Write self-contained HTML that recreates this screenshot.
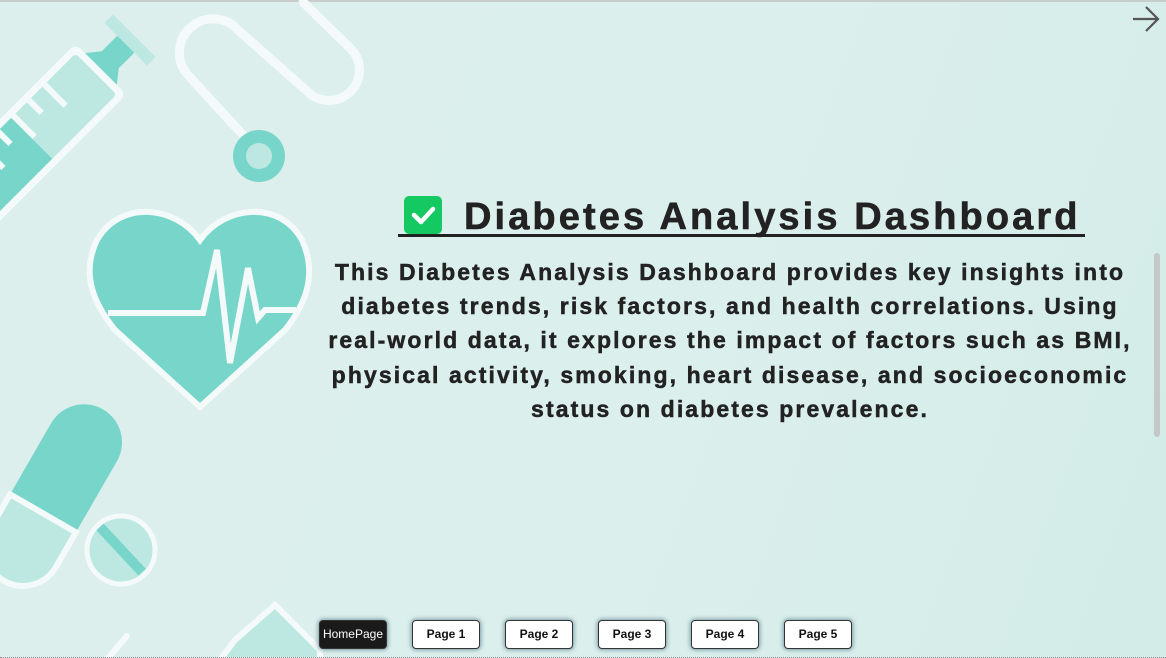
<!DOCTYPE html>
<html><head><style>
html,body{margin:0;padding:0}
body{width:1166px;height:658px;overflow:hidden;position:relative;font-family:"Liberation Sans",Arial,sans-serif;background:linear-gradient(110deg,#dcefec 0%,#dbefec 60%,#d3ece7 100%)}
.top{position:absolute;left:0;top:0;width:1166px;height:2px;background:#c8cccb}
.bot{position:absolute;left:0;bottom:0;width:1166px;height:0;border-bottom:1px dotted #888}
h1{position:absolute;left:398px;top:196px;margin:0;font-size:38px;font-weight:bold;color:#222;white-space:nowrap;letter-spacing:3.1px;-webkit-text-stroke:0.6px #222}
.ul{position:absolute;left:398px;top:234px;width:687px;height:3px;background:#222}
.chk{display:inline-block;width:38px;height:38px;background:#14c962;border-radius:5px;vertical-align:-5px;margin:0 22px 0 6px;position:relative;-webkit-text-stroke:0}
.p{position:absolute;left:300px;width:860px;text-align:center;font-size:23px;font-weight:bold;color:#222;letter-spacing:2.1px;white-space:nowrap;line-height:26px;-webkit-text-stroke:0.5px #222}
.sb{position:absolute;left:1154px;top:253px;width:6px;height:184px;background:#c4c9c8;border-radius:3px}
.btn{position:absolute;top:620px;height:27px;width:66px;background:#fff;border:1px solid #333;border-radius:4px;box-shadow:0 0 4px 1px #7a9aa6;font-size:12px;font-weight:bold;text-align:center;line-height:27px;color:#111}
.btn.h{background:#1a1a1a;color:#fff;font-weight:normal;font-size:12px}
</style></head><body>
<div class="top"></div>
<svg width="1166" height="658" style="position:absolute;left:0;top:0">
<path d="M303 2 L350 48 A30 30 0 0 1 308 92 L238 30 A30 30 0 0 0 188 75 L243 135" fill="none" stroke="#f4faf9" stroke-width="9" stroke-linecap="round" stroke-linejoin="round"/>
<circle cx="259" cy="156" r="26" fill="#78d5ca"/><circle cx="259" cy="156" r="13" fill="#bde8e2"/>
<g transform="translate(60,110) rotate(45)">
<rect x="-30" y="-105" width="60" height="12" fill="#bde8e2"/>
<path d="M-12 -93 h24 v22 l12 15 h-48 l12 -15z" fill="#78d5ca"/>
<rect x="-36" y="-58" width="72" height="200" rx="8" fill="#f4faf9"/>
<rect x="-29" y="-51" width="58" height="190" rx="4" fill="#bde8e2"/>
<rect x="-29" y="40" width="58" height="100" fill="#78d5ca"/>
<g fill="#f4faf9"><rect x="-29" y="-10" width="30" height="6"/><rect x="-29" y="12" width="18" height="6"/><rect x="-29" y="34" width="30" height="6"/><rect x="-29" y="56" width="18" height="6"/><rect x="-29" y="78" width="30" height="6"/></g>
</g>
<path d="M200 240 C175 205 120 200 97 240 C80 275 95 305 115 330 L200 407 L285 330 C305 305 318 275 302 240 C280 200 225 205 200 240Z" fill="#78d5ca" stroke="#f4faf9" stroke-width="6"/>
<polyline points="108,313 203,313 217,250 230,363 248,268 258,318 265,310 296,310" fill="none" stroke="#f4faf9" stroke-width="6"/>
<g transform="translate(68,470) rotate(30)">
<rect x="-38" y="-70" width="76" height="190" rx="38" fill="#78d5ca"/>
<path d="M-38 50 h76 v40 a38 38 0 0 1 -76 0z" fill="#bde8e2" stroke="#f4faf9" stroke-width="6"/>
</g>
<circle cx="121" cy="550" r="34" fill="#bde8e2" stroke="#f4faf9" stroke-width="5"/>
<path d="M100 527 L142 572" stroke="#78d5ca" stroke-width="10"/>
<path d="M235 640 L275 605 L320 650 L320 660 L220 660Z" fill="#bde8e2" stroke="#f4faf9" stroke-width="6"/>
<path d="M108 658 L127 636" stroke="#f4faf9" stroke-width="6" stroke-linecap="round"/>
<path d="M1133 19 H1158 M1146 7 L1158 19 L1146 31" fill="none" stroke="#555" stroke-width="2.2"/>
</svg>
<h1><span class="chk"><svg width="38" height="38" style="position:absolute;left:0;top:0"><path d="M10 19 L17 26 L29 13" fill="none" stroke="#fff" stroke-width="4.5" stroke-linecap="round" stroke-linejoin="round"/></svg></span>Diabetes Analysis Dashboard</h1>
<div class="ul"></div>
<div class="p" style="top:259px">This Diabetes Analysis Dashboard provides key insights into</div>
<div class="p" style="top:293px">diabetes trends, risk factors, and health correlations. Using</div>
<div class="p" style="top:327px">real-world data, it explores the impact of factors such as BMI,</div>
<div class="p" style="top:362px">physical activity, smoking, heart disease, and socioeconomic</div>
<div class="p" style="top:396px">status on diabetes prevalence.</div>
<div class="sb"></div>
<div class="btn h" style="left:319px">HomePage</div>
<div class="btn" style="left:412px">Page 1</div>
<div class="btn" style="left:505px">Page 2</div>
<div class="btn" style="left:598px">Page 3</div>
<div class="btn" style="left:691px">Page 4</div>
<div class="btn" style="left:784px">Page 5</div>
<div class="bot"></div>
</body></html>
